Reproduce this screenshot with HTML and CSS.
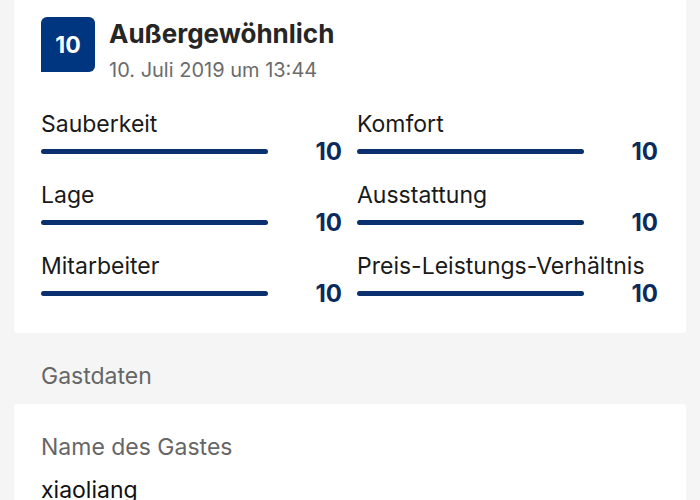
FILE: index.html
```html
<!DOCTYPE html>
<html lang="de">
<head>
<meta charset="utf-8">
<title>Bewertung</title>
<link rel="stylesheet" href="styles.css">
</head>
<body>
<section class="card review">
  <header class="review-head">
    <div class="badge">10</div>
    <div class="head-text">
      <h1 class="title">Außergewöhnlich</h1>
      <div class="date">10. Juli 2019 um 13:44</div>
    </div>
  </header>
  <div class="ratings">
    <div class="rating">
      <div class="rating-label">Sauberkeit</div>
      <div class="rating-row"><span class="bar"></span><span class="score">10</span></div>
    </div>
    <div class="rating">
      <div class="rating-label">Komfort</div>
      <div class="rating-row"><span class="bar"></span><span class="score">10</span></div>
    </div>
    <div class="rating">
      <div class="rating-label">Lage</div>
      <div class="rating-row"><span class="bar"></span><span class="score">10</span></div>
    </div>
    <div class="rating">
      <div class="rating-label">Ausstattung</div>
      <div class="rating-row"><span class="bar"></span><span class="score">10</span></div>
    </div>
    <div class="rating">
      <div class="rating-label">Mitarbeiter</div>
      <div class="rating-row"><span class="bar"></span><span class="score">10</span></div>
    </div>
    <div class="rating">
      <div class="rating-label">Preis-Leistungs-Verhältnis</div>
      <div class="rating-row"><span class="bar"></span><span class="score">10</span></div>
    </div>
  </div>
</section>
<h2 class="section-title">Gastdaten</h2>
<section class="card guest">
  <div class="field-label">Name des Gastes</div>
  <div class="field-value">xiaoliang</div>
</section>
</body>
</html>
```
FILE: styles.css
```css
html, body {
  margin: 0;
  padding: 0;
}
body {
  background: #f5f5f5;
  font-family: Inter, "Liberation Sans", sans-serif;
  color: #1a1a1a;
  width: 700px;
  height: 500px;
  overflow: hidden;
}
.card {
  background: #ffffff;
  margin: 0 14px;
  padding: 0 28px 0 27px;
  border-radius: 3px;
}
.review {
  padding-top: 17px;
  padding-bottom: 26px;
  border-radius: 0 0 3px 3px;
}
.review-head {
  display: flex;
  gap: 14px;
  align-items: flex-start;
}
.badge {
  width: 54px;
  height: 55px;
  background: #003580;
  color: #ffffff;
  border-radius: 6px 6px 6px 0;
  display: flex;
  align-items: center;
  justify-content: center;
  font-weight: 700;
  font-size: 23px;
}
.head-text {
  display: flex;
  flex-direction: column;
}
.title {
  margin: 2px 0 0 0;
  font-size: 26px;
  line-height: 30px;
  font-weight: 700;
  color: #262626;
  white-space: nowrap;
}
.date {
  font-size: 20px;
  line-height: 24px;
  color: #6b6b6b;
  margin-top: 9px;
  white-space: nowrap;
}
.ratings {
  margin-top: 28px;
  display: grid;
  grid-template-columns: 301px 301px;
  column-gap: 15px;
  row-gap: 16px;
}
.rating-label {
  font-size: 23px;
  line-height: 28px;
  color: #1a1a1a;
  white-space: nowrap;
}
.rating-row {
  height: 27px;
  display: flex;
  align-items: center;
  justify-content: space-between;
}
.bar {
  display: block;
  width: 227px;
  height: 5px;
  border-radius: 3px;
  background: #0b3070;
}
.score {
  font-size: 24px;
  font-weight: 700;
  color: #0c2a5c;
}
.section-title {
  margin: 0;
  padding: 29px 41px 14px 41px;
  font-size: 23px;
  line-height: 28px;
  font-weight: 400;
  color: #666666;
}
.guest {
  padding-top: 29px;
  padding-bottom: 20px;
  border-radius: 3px 3px 0 0;
}
.field-label {
  font-size: 23px;
  line-height: 28px;
  color: #666666;
}
.field-value {
  margin-top: 15px;
  font-size: 23px;
  line-height: 28px;
  color: #111111;
}
```
